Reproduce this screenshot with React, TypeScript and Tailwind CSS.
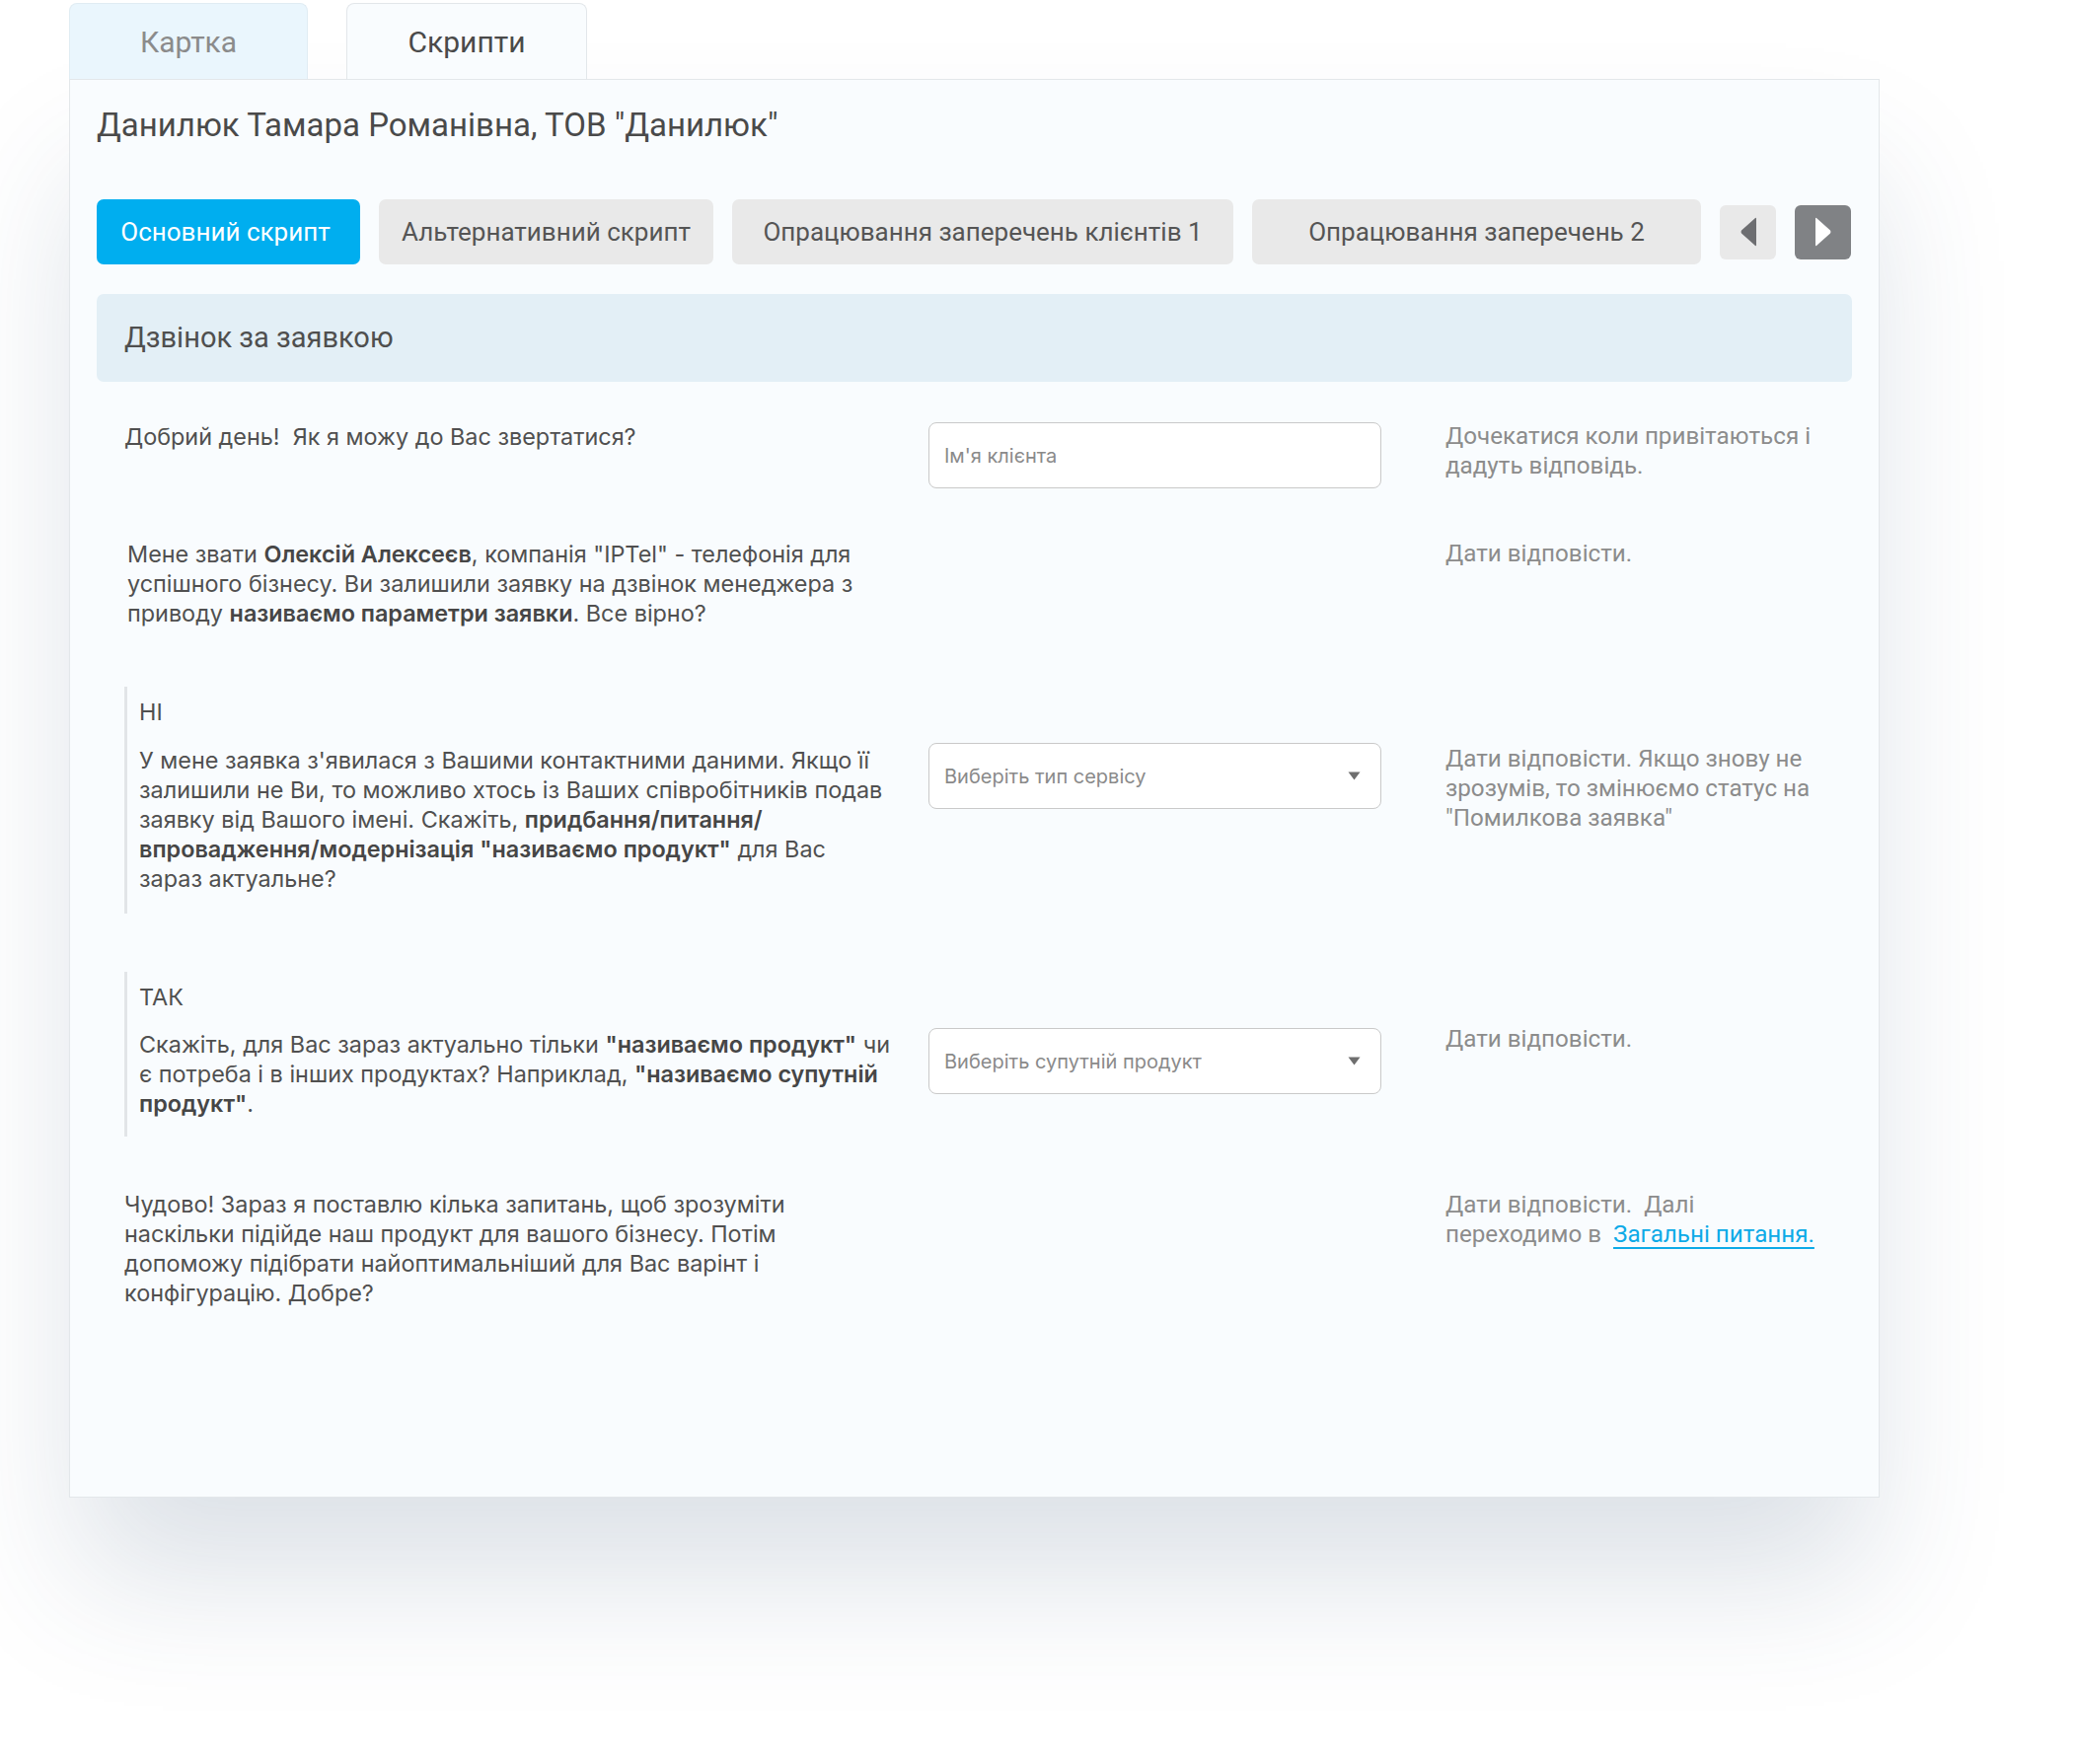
import React from "react";

// ── Script viewer: client card with call script steps ────────────────────────

const scriptTabs = [
  { label: "Основний скрипт", width: "w-[267px]", active: true },
  { label: "Альтернативний скрипт", width: "w-[339px]", active: false },
  { label: "Опрацювання заперечень клієнтів 1", width: "w-[508px]", active: false },
  { label: "Опрацювання заперечень 2", width: "w-[455px]", active: false },
];

function B({ children }: { children: React.ReactNode }): React.ReactElement {
  return <span className="font-semibold text-[#464646]">{children}</span>;
}

function Caret(): React.ReactElement {
  return (
    <svg width="13" height="9" viewBox="0 0 13 9" className="shrink-0">
      <path d="M0.5 0.5 H12.5 L6.5 8.5 Z" fill="#6e6e6e" />
    </svg>
  );
}

function SelectBox({ placeholder }: { placeholder: string }): React.ReactElement {
  return (
    <div className="w-[459px] h-[67px] rounded-[8px] border border-[#c9c9c9] bg-white flex items-center justify-between pl-[15px] pr-[20px] font-['Inter',sans-serif] text-[20px] text-[#8a8a8a]">
      <span>{placeholder}</span>
      <Caret />
    </div>
  );
}

export default function App(): React.ReactElement {
  return (
    <div className="w-[2101px] h-[1788px] overflow-hidden bg-white font-['Roboto',sans-serif] text-[#505050]">
      <div className="ml-[70px] pt-[3px] w-[1835px]">
        {/* Top tabs */}
        <div className="flex gap-[39px] h-[77px]">
          <div className="w-[242px] rounded-t-[8px] border border-b-0 border-[#e0ecf3] bg-[#eaf6fd] flex items-center justify-center text-[30px] text-[#8b8b8b]">
            Картка
          </div>
          <div className="w-[244px] rounded-t-[8px] border border-b-0 border-[#e3e7ea] bg-[#f9fcfe] flex items-center justify-center text-[30px] text-[#4a4a4a]">
            Скрипти
          </div>
        </div>

        {/* Card */}
        <div className="h-[1438px] border border-[#e3e7ea] bg-[#f9fcfe] px-[27px] pt-[25px] shadow-[0_90px_130px_-10px_rgba(45,75,115,0.17)]">
          <h1 className="text-[33px] leading-[41px] text-[#4a4a4a]">
            Данилюк Тамара Романівна, ТОВ "Данилюк"
          </h1>

          {/* Script selector */}
          <div className="mt-[55px] flex items-center gap-[19px]">
            {scriptTabs.map((tab) => (
              <div
                key={tab.label}
                className={`${tab.width} h-[66px] shrink-0 rounded-[7px] flex items-center justify-center text-[26px] ${
                  tab.active ? "bg-[#00aeef] text-white pr-[6px]" : "bg-[#e9e9e9] text-[#555555]"
                }`}
              >
                {tab.label}
              </div>
            ))}
            <div className="w-[57px] h-[55px] shrink-0 rounded-[6px] bg-[#e9e9e9] flex items-center justify-center">
              <svg width="20" height="32" viewBox="0 0 20 32">
                <path d="M17 2 Q18 1 18 3 V29 Q18 31 17 30 L3 17.5 Q2 16 3 14.5 Z" fill="#6d6e71" />
              </svg>
            </div>
            <div className="w-[57px] h-[55px] shrink-0 rounded-[6px] bg-[#808285] flex items-center justify-center">
              <svg width="20" height="32" viewBox="0 0 20 32">
                <path d="M3 2 Q2 1 2 3 V29 Q2 31 3 30 L17 17.5 Q18 16 17 14.5 Z" fill="#ffffff" />
              </svg>
            </div>
          </div>

          {/* Section header */}
          <div className="mt-[30px] h-[89px] rounded-[7px] bg-[#e3eff6] flex items-center pl-[28px] text-[29px] text-[#4f4f4f]">
            Дзвінок за заявкою
          </div>

          <div className="px-[28px] text-[23.4px] font-['Inter',sans-serif]">
            {/* Greeting */}
            <div className="mt-[41px] flex items-start">
              <div className="w-[815px] shrink-0 leading-[30px]">Добрий день!&nbsp; Як я можу до Вас звертатися?</div>
              <div className="w-[459px] h-[67px] shrink-0 rounded-[8px] border border-[#c9c9c9] bg-white flex items-center pl-[15px] text-[20px] text-[#8a8a8a]">
                Ім'я клієнта
              </div>
              <div className="ml-[65px] w-[390px] shrink-0 -mt-[1px] leading-[30px] font-['Roboto',sans-serif] text-[24.2px] text-[#8c8c8c]">
                Дочекатися коли привітаються і<br />
                дадуть відповідь.
              </div>
            </div>

            {/* Introduction */}
            <div className="mt-[52px] flex items-start">
              <div className="w-[815px] shrink-0 leading-[30px] pl-[3px]">
                Мене звати <B>Олексій Алексеєв</B>, компанія "IPTel" - телефонія для
                <br />
                успішного бізнесу. Ви залишили заявку на дзвінок менеджера з
                <br />
                приводу <B>називаємо параметри заявки</B>. Все вірно?
              </div>
              <div className="w-[459px] shrink-0" />
              <div className="ml-[65px] w-[390px] shrink-0 -mt-[1px] leading-[30px] font-['Roboto',sans-serif] text-[24.2px] text-[#8c8c8c]">
                Дати відповісти.
              </div>
            </div>

            {/* Answer: no */}
            <div className="mt-[59px] flex items-start">
              <div className="w-[815px] shrink-0">
                <div className="border-l-[3px] border-[#e2e5e8] pl-[12px] pt-[11px] pb-[20px] leading-[30px]">
                  <div>НІ</div>
                  <div className="mt-[19px]">
                    У мене заявка з'явилася з Вашими контактними даними. Якщо її
                    <br />
                    залишили не Ви, то можливо хтось із Ваших співробітників подав
                    <br />
                    заявку від Вашого імені. Скажіть, <B>придбання/питання/</B>
                    <br />
                    <B>впровадження/модернізація "називаємо продукт"</B> для Вас
                    <br />
                    зараз актуальне?
                  </div>
                </div>
              </div>
              <div className="pt-[57px] shrink-0">
                <SelectBox placeholder="Виберіть тип сервісу" />
              </div>
              <div className="ml-[65px] w-[390px] shrink-0 pt-[58px] leading-[30px] font-['Roboto',sans-serif] text-[24.2px] text-[#8c8c8c]">
                Дати відповісти. Якщо знову не
                <br />
                зрозумів, то змінюємо статус на
                <br />
                "Помилкова заявка"
              </div>
            </div>

            {/* Answer: yes */}
            <div className="mt-[59px] flex items-start">
              <div className="w-[815px] shrink-0">
                <div className="border-l-[3px] border-[#e2e5e8] pl-[12px] pt-[11px] pb-[18px] leading-[30px]">
                  <div>ТАК</div>
                  <div className="mt-[18px]">
                    Скажіть, для Вас зараз актуально тільки <B>"називаємо продукт"</B> чи
                    <br />
                    є потреба і в інших продуктах? Наприклад, <B>"називаємо супутній</B>
                    <br />
                    <B>продукт"</B>.
                  </div>
                </div>
              </div>
              <div className="pt-[57px] shrink-0">
                <SelectBox placeholder="Виберіть супутній продукт" />
              </div>
              <div className="ml-[65px] w-[390px] shrink-0 pt-[53px] leading-[30px] font-['Roboto',sans-serif] text-[24.2px] text-[#8c8c8c]">
                Дати відповісти.
              </div>
            </div>

            {/* Closing */}
            <div className="mt-[54px] flex items-start">
              <div className="w-[815px] shrink-0 leading-[30px]">
                Чудово! Зараз я поставлю кілька запитань, щоб зрозуміти
                <br />
                наскільки підійде наш продукт для вашого бізнесу. Потім
                <br />
                допоможу підібрати найоптимальніший для Вас варінт і
                <br />
                конфігурацію. Добре?
              </div>
              <div className="w-[459px] shrink-0" />
              <div className="ml-[65px] w-[390px] shrink-0 leading-[30px] font-['Roboto',sans-serif] text-[24.2px] text-[#8c8c8c]">
                Дати відповісти.&nbsp; Далі
                <br />
                переходимо в&nbsp;{" "}
                <a href="#" className="text-[#0daae7] underline underline-offset-[5px] decoration-[2px]">
                  Загальні питання.
                </a>
              </div>
            </div>
          </div>
        </div>
      </div>
    </div>
  );
}
